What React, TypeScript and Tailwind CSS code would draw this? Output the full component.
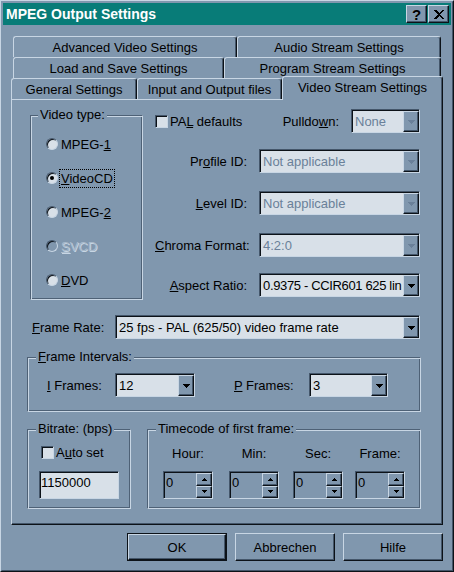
import React from "react";

const RAISED =
  "border border-t-[#c8d6e4] border-l-[#c8d6e4] border-r-[#0c1218] border-b-[#0c1218] shadow-[inset_-1px_-1px_0_0_#44566a] bg-[#8097ae]";
const SUNKEN =
  "border border-t-[#44566a] border-l-[#44566a] border-r-[#c8d6e4] border-b-[#c8d6e4]";

const Down = ({ color }: { color: string }) => (
  <svg width="7" height="4" viewBox="0 0 7 4" shapeRendering="crispEdges">
    <path d="M0 0h7v1H0zM1 1h5v1H1zM2 2h3v1H2zM3 3h1v1H3z" fill={color} />
  </svg>
);
const SpinUp = () => (
  <svg width="5" height="3" viewBox="0 0 5 3" shapeRendering="crispEdges">
    <path d="M2 0h1v1H2zM1 1h3v1H1zM0 2h5v1H0z" fill="#000" />
  </svg>
);
const SpinDown = () => (
  <svg width="5" height="3" viewBox="0 0 5 3" shapeRendering="crispEdges">
    <path d="M0 0h5v1H0zM1 1h3v1H1zM2 2h1v1H2z" fill="#000" />
  </svg>
);

const U = ({ c }: { c: string }) => <span className="underline decoration-1 underline-offset-[1px]">{c}</span>;

function Combo({
  cls,
  text,
  disabled,
  textCls = "",
}: {
  cls: string;
  text: string;
  disabled?: boolean;
  textCls?: string;
}) {
  return (
    <div className={`${cls} h-[24px] flex ${SUNKEN}`}>
      <div className="flex flex-1 min-w-0 border-t border-l border-t-[#0c1218] border-l-[#0c1218] bg-[#d8e0e8]">
        <div
          className={`flex-1 min-w-0 overflow-hidden whitespace-nowrap pl-[2px] flex items-center ${textCls} ${
            disabled ? "text-[#6a8099]" : "text-black"
          }`}
        >
          {text}
        </div>
        <div className={`w-[16px] shrink-0 flex items-center justify-center ${RAISED}`}>
          <Down color={disabled ? "#6a8099" : "#000"} />
        </div>
      </div>
    </div>
  );
}

function Check() {
  return (
    <div className={`w-[13px] h-[13px] shrink-0 ${SUNKEN} bg-[#d8e0e8] shadow-[inset_1px_1px_0_0_#0c1218]`} />
  );
}

function Radio({
  children,
  checked,
  disabled,
  focus,
}: {
  children: React.ReactNode;
  checked?: boolean;
  disabled?: boolean;
  focus?: boolean;
}) {
  return (
    <div className="h-[34px] flex items-center pl-[15px]">
      <div
        className={`w-[12px] h-[12px] rounded-full flex items-center justify-center border border-t-[#44566a] border-l-[#44566a] border-r-[#c8d6e4] border-b-[#c8d6e4] shadow-[inset_1px_1px_0_0_#0c1218] ${
          disabled ? "bg-[#8097ae]" : "bg-[#d8e0e8]"
        }`}
      >
        {checked && <div className="w-[4px] h-[4px] rounded-full bg-black" />}
      </div>
      <span
        className={`ml-[1px] px-[1px] py-[1px] border border-dotted ${
          focus ? "border-black" : "border-transparent"
        } ${disabled ? "text-[#a9bacb] [text-shadow:1px_1px_0_#c8d6e4]" : "text-black"}`}
      >
        {children}
      </span>
    </div>
  );
}

function Group({
  cls,
  label,
  labelCls,
  children,
}: {
  cls: string;
  label: React.ReactNode;
  labelCls: string;
  children?: React.ReactNode;
}) {
  return (
    <div
      className={`relative ${cls} border border-t-[#4e6176] border-l-[#4e6176] border-r-[#c8d6e4] border-b-[#c8d6e4] shadow-[inset_1px_1px_0_0_#c8d6e4,inset_-1px_-1px_0_0_#4e6176]`}
    >
      <span className={`absolute -top-[9px] ${labelCls} px-[2px] bg-[#8097ae] leading-[15px] whitespace-nowrap`}>
        {label}
      </span>
      {children}
    </div>
  );
}

function Spinner() {
  return (
    <div className={`w-[50px] h-[28px] flex ${SUNKEN}`}>
      <div className="flex flex-1 border-t border-l border-t-[#0c1218] border-l-[#0c1218] bg-[#8097ae]">
        <div className="flex-1 pl-[1px] pt-[2px]">0</div>
        <div className="w-[16px] flex flex-col">
          <div className={`flex-1 flex items-center justify-center ${RAISED}`}>
            <SpinUp />
          </div>
          <div className={`flex-1 flex items-center justify-center ${RAISED}`}>
            <SpinDown />
          </div>
        </div>
      </div>
    </div>
  );
}

const TAB =
  "h-full flex items-center justify-center border-l border-t border-r border-l-[#c8d6e4] border-t-[#c8d6e4] border-r-[#0c1218] shadow-[inset_-1px_0_0_0_#44566a] rounded-t-[3px] whitespace-nowrap";

export default function App() {
  return (
    <div className="w-[454px] h-[572px] bg-[#8097ae] font-['Liberation_Sans',Arial,sans-serif] text-[13px] leading-[15px] text-black border border-t-[#c8d6e4] border-l-[#c8d6e4] border-r-[#0c1218] border-b-[#0c1218]">
      <div className="h-full p-[1px] border border-t-[#8097ae] border-l-[#8097ae] border-r-[#44566a] border-b-[#44566a]">
        {/* Title bar */}
        <div className="h-[22px] bg-[#087c78] flex items-center pl-[3px] pr-[2px]">
          <div className="flex-1 text-white font-bold text-[14px] leading-[16px]">MPEG Output Settings</div>
          <div className={`w-[21px] h-[18px] flex items-center justify-center ${RAISED} font-bold text-[15px]`}>?</div>
          <div className={`ml-[1px] w-[21px] h-[18px] flex items-center justify-center ${RAISED}`}>
            <svg width="10" height="9" viewBox="0 0 10 9" shapeRendering="crispEdges">
              <path d="M0 0h2l3 3 3-3h2v1L6 4.5 10 8v1H8L5 6 2 9H0V8l4-3.5L0 1z" fill="#000" />
            </svg>
          </div>
        </div>

        <div className="px-[8px] mt-[11px]">
          {/* Tabs */}
          <div className="h-[21px] flex pl-[2px]">
            <div className={`${TAB} w-[224px]`}>Advanced Video Settings</div>
            <div className={`${TAB} w-[204px]`}>Audio Stream Settings</div>
          </div>
          <div className="h-[21px] flex pl-[2px]">
            <div className={`${TAB} w-[211px]`}>Load and Save Settings</div>
            <div className={`${TAB} w-[217px]`}>Program Stream Settings</div>
          </div>
          <div className="h-[21px] flex items-end">
            <div className={`${TAB} w-[126px]`}>General Settings</div>
            <div className={`${TAB} w-[145px]`}>Input and Output files</div>
            <div
              className={`relative z-10 w-[161px] h-[24px] mb-[-1px] pb-[3px] flex items-center justify-center bg-[#8097ae] border-l border-t border-r border-l-[#c8d6e4] border-t-[#c8d6e4] border-r-[#0c1218] shadow-[inset_-1px_0_0_0_#44566a] rounded-t-[3px] whitespace-nowrap`}
            >
              Video Stream Settings
            </div>
          </div>

          {/* Panel */}
          <div className="w-[432px] h-[426px] border-l border-t border-r border-b border-l-[#c8d6e4] border-t-[#c8d6e4] border-r-[#0c1218] border-b-[#0c1218] shadow-[inset_-1px_-1px_0_0_#44566a]">
            {/* Section A */}
            <div className="flex mt-[9px] ml-[18px]">
              <Group cls="mt-[6px] w-[113px] h-[185px] pt-[11px]" label="Video type:" labelCls="left-[7px]">
                <Radio>
                  MPEG-<U c="1" />
                </Radio>
                <Radio checked focus>
                  <U c="V" />
                  ideoCD
                </Radio>
                <Radio>
                  MPEG-<U c="2" />
                </Radio>
                <Radio disabled>
                  <U c="S" />
                  VCD
                </Radio>
                <Radio>
                  <U c="D" />
                  VD
                </Radio>
              </Group>

              <div className="ml-[12px] w-[265px] flex flex-col">
                <div className="h-[24px] flex items-center">
                  <Check />
                  <span className="ml-[2px]">
                    PA<U c="L" /> defaults
                  </span>
                  <span className="flex-1 text-right pr-[12px]">
                    Pulldo<U c="w" />n:
                  </span>
                  <Combo cls="w-[69px]" text="None" disabled />
                </div>
                <div className="mt-[16px] flex items-center">
                  <span className="w-[92px] text-right">
                    Pr<U c="o" />file ID:
                  </span>
                  <Combo cls="ml-[12px] w-[161px]" text="Not applicable" disabled />
                </div>
                <div className="mt-[18px] flex items-center">
                  <span className="w-[92px] text-right">
                    <U c="L" />
                    evel ID:
                  </span>
                  <Combo cls="ml-[12px] w-[161px]" text="Not applicable" disabled />
                </div>
                <div className="mt-[18px] flex items-center">
                  <span className="w-[92px] text-right whitespace-nowrap">
                    <U c="C" />
                    hroma Format:
                  </span>
                  <Combo cls="ml-[12px] w-[161px]" text="4:2:0" disabled />
                </div>
                <div className="mt-[16px] flex items-center">
                  <span className="w-[92px] text-right">
                    <U c="A" />
                    spect Ratio:
                  </span>
                  <Combo
                    cls="ml-[12px] w-[161px]"
                    text="0.9375 - CCIR601 625 lin"
                    textCls="pl-[1px] tracking-[-0.35px]"
                  />
                </div>
              </div>
            </div>

            {/* Frame rate */}
            <div className="flex items-center mt-[15px] ml-[20px]">
              <span className="w-[83px]">
                <U c="F" />
                rame Rate:
              </span>
              <Combo cls="w-[305px]" text="25 fps - PAL (625/50) video frame rate" />
            </div>

            {/* Frame intervals */}
            <Group
              cls="mt-[18px] ml-[15px] w-[394px] h-[55px] pt-[15px] pl-[19px]"
              label={
                <>
                  <U c="F" />
                  rame Intervals:
                </>
              }
              labelCls="left-[8px]"
            >
              <div className="flex items-center">
                <span className="w-[68px]">
                  <U c="I" /> Frames:
                </span>
                <Combo cls="w-[80px]" text="12" />
                <span className="ml-[39px] w-[75px]">
                  <U c="P" /> Frames:
                </span>
                <Combo cls="w-[79px]" text="3" />
              </div>
            </Group>

            {/* Bottom groups */}
            <div className="flex mt-[17px] ml-[15px]">
              <Group cls="w-[104px] h-[80px]" label="Bitrate: (bps)" labelCls="left-[8px]">
                <div className="mt-[16px] pl-[13px] h-[13px] flex items-center">
                  <Check />
                  <span className="ml-[2px]">
                    A<U c="u" />
                    to set
                  </span>
                </div>
                <div className={`mt-[12px] ml-[11px] w-[80px] h-[28px] flex ${SUNKEN}`}>
                  <div className="flex-1 border-t border-l border-t-[#0c1218] border-l-[#0c1218] bg-[#d8e0e8] pt-[2px] pl-[0px]">
                    1150000
                  </div>
                </div>
              </Group>
              <Group cls="ml-[16px] w-[274px] h-[80px] flex" label="Timecode of first frame:" labelCls="left-[8px]">
                <div className="ml-[15px] w-[50px] flex flex-col items-center">
                  <span className="mt-[16px] whitespace-nowrap">Hour:</span>
                  <div className="mt-[10px]">
                    <Spinner />
                  </div>
                </div>
                <div className="ml-[16px] w-[50px] flex flex-col items-center">
                  <span className="mt-[16px] whitespace-nowrap">Min:</span>
                  <div className="mt-[10px]">
                    <Spinner />
                  </div>
                </div>
                <div className="ml-[14px] w-[50px] flex flex-col items-center">
                  <span className="mt-[16px] whitespace-nowrap">Sec:</span>
                  <div className="mt-[10px]">
                    <Spinner />
                  </div>
                </div>
                <div className="ml-[12px] w-[50px] flex flex-col items-center">
                  <span className="mt-[16px] whitespace-nowrap">Frame:</span>
                  <div className="mt-[10px]">
                    <Spinner />
                  </div>
                </div>
              </Group>
            </div>
          </div>

          {/* Buttons */}
          <div className="mt-[8px] flex justify-end gap-[8px]">
            <div className="w-[100px] h-[28px] border border-[#0c1218] flex">
              <div className={`flex-1 flex items-center justify-center ${RAISED}`}>OK</div>
            </div>
            <div className={`w-[100px] h-[28px] flex items-center justify-center ${RAISED}`}>Abbrechen</div>
            <div className={`w-[100px] h-[28px] flex items-center justify-center ${RAISED}`}>Hilfe</div>
          </div>
        </div>
      </div>
    </div>
  );
}
